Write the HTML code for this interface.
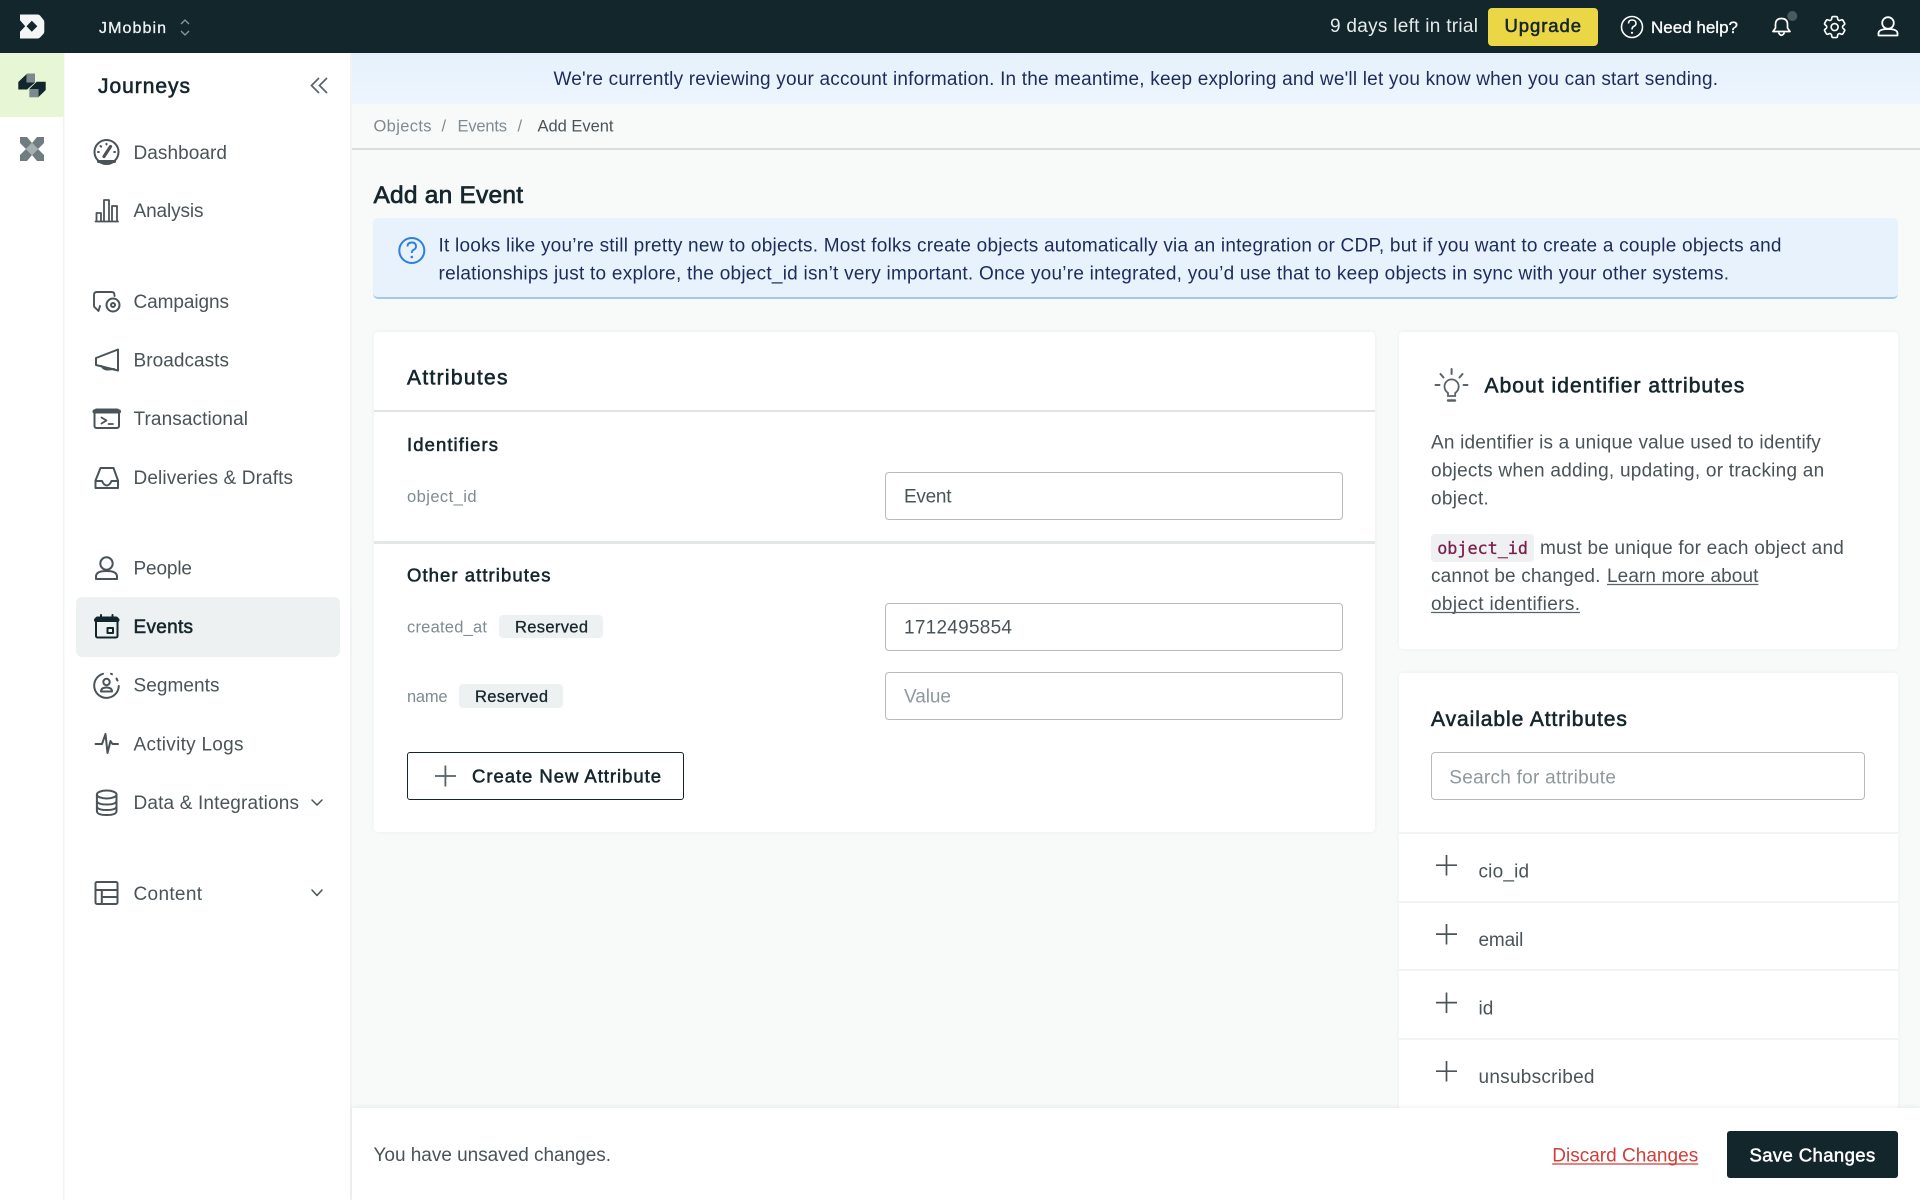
<!DOCTYPE html>
<html lang="en"><head><meta charset="utf-8"><title>Add an Event</title>
<style>
html,body{margin:0;padding:0;width:1920px;height:1200px;overflow:hidden;background:#f8fafa;font-family:"Liberation Sans",sans-serif}
.b{position:absolute;box-sizing:border-box}
.inp{background:#fff;border:1.5px solid #b5bbbe;border-radius:4px}
.card{background:#fff;border-radius:4px;box-shadow:0 0 4px rgba(20,40,50,.06)}
svg{position:absolute;left:0;top:0}
text{font-family:"Liberation Sans",sans-serif;font-size:19px;fill:currentColor;color:#4a5458}
.m{stroke:currentColor;stroke-width:.3}
.sb{stroke:currentColor;stroke-width:.55;color:#15262c}
.d{color:#15262c}
.s{font-size:16.5px}
.g{color:#7f8b90}
.ph{color:#8f989c}
.h{font-size:21px;stroke:currentColor;stroke-width:.6;color:#15262c}
.bl{color:#1d2c5a}
.ic{fill:none;stroke:#4a5458;stroke-width:2;stroke-linejoin:round;stroke-linecap:round}
</style></head><body>
<div class="b" style="left:0;top:0;width:1920px;height:53px;background:#13262c"></div>
<div class="b" style="left:0;top:53px;width:64px;height:1147px;background:#fff;border-right:1px solid #f0f2f3"></div>
<div class="b" style="left:0;top:53px;width:64px;height:64px;background:#e7f7d6"></div>
<div class="b" style="left:65px;top:53px;width:287px;height:1147px;background:#fff;border-right:2px solid #f0f2f3"></div>
<div class="b" style="left:76px;top:597px;width:264px;height:60px;background:#edf1f2;border-radius:6px"></div>
<div class="b" style="left:352px;top:53px;width:1568px;height:51px;background:linear-gradient(#e6f1fd,#edf5fd)"></div>
<div class="b" style="left:352px;top:148px;width:1568px;height:1.5px;background:#d9dddf"></div>
<div class="b" style="left:373px;top:218px;width:1525px;height:81px;background:#e8f2fc;border-bottom:2px solid #9ccbeb;border-radius:5px"></div>

<div class="b card" style="left:374px;top:332px;width:1001px;height:500px"></div>
<div class="b" style="left:374px;top:410px;width:1001px;height:2px;background:#e0e3e5"></div>
<div class="b" style="left:374px;top:541px;width:1001px;height:2.5px;background:#e4e7e8"></div>
<div class="b inp" style="left:885px;top:472px;width:458px;height:48px"></div>
<div class="b inp" style="left:885px;top:603px;width:458px;height:48px"></div>
<div class="b inp" style="left:885px;top:672px;width:458px;height:48px"></div>
<div class="b" style="left:499px;top:615px;width:104px;height:23px;background:#eef1f2;border-radius:4px"></div>
<div class="b" style="left:459px;top:684px;width:104px;height:24px;background:#eef1f2;border-radius:4px"></div>
<div class="b" style="left:407px;top:752px;width:277px;height:48px;border:1.5px solid #13262c;border-radius:3px;background:#fff"></div>

<div class="b card" style="left:1399px;top:332px;width:499px;height:317px"></div>
<div class="b" style="left:1431px;top:534px;width:103px;height:28px;background:#eef0f1;border-radius:4px"></div>

<div class="b card" style="left:1399px;top:673px;width:499px;height:527px"></div>
<div class="b inp" style="left:1431px;top:752px;width:434px;height:48px"></div>
<div class="b" style="left:1399px;top:832px;width:499px;height:1.5px;background:#f1f3f4"></div>
<div class="b" style="left:1399px;top:901px;width:499px;height:1.5px;background:#f1f3f4"></div>
<div class="b" style="left:1399px;top:969px;width:499px;height:1.5px;background:#f1f3f4"></div>
<div class="b" style="left:1399px;top:1038px;width:499px;height:1.5px;background:#f1f3f4"></div>

<div class="b" style="left:352px;top:1108px;width:1568px;height:92px;background:#fff;box-shadow:0 -1px 4px rgba(20,40,50,.07)"></div>
<div class="b" style="left:1488px;top:8px;width:110px;height:38px;background:#ebd646;border-radius:4px"></div>
<div class="b" style="left:1727px;top:1131px;width:171px;height:47px;background:#13262c;border-radius:3px"></div>

<svg width="1920" height="1200" viewBox="0 0 1920 1200" xmlns="http://www.w3.org/2000/svg">
<!-- logo -->
<path d="M20 14.500H37.500Q39 14.500 40 15.500L43.300 19.500Q44.300 20.700 44.300 22V31.500Q44.300 33 43.300 34L40 37.500Q39 38.500 37.500 38.500H20V31.800L25.200 26.300L20 20.300Z" fill="#f3f5f6"/>
<path d="M31.800 20.700L37.300 26.300L31.800 31.800L26.500 26.300Z" fill="#13262c"/>
<text x="99" y="33" textLength="67" class="m" style="font-size:16px;color:#eef1f2">JMobbin</text>
<path d="M181 24L185 20L189 24M181 31L185 35L189 31" fill="none" stroke="#8d999d" stroke-width="1.300"/>

<text x="1330" y="32" textLength="148" style="color:#e6eaeb">9 days left in trial</text>
<text x="1504.500" y="32" textLength="76.500" class="sb" style="font-size:18.500px;color:#13262c">Upgrade</text>
<circle cx="1632" cy="27" r="10.500" fill="none" stroke="#fff" stroke-width="1.600"/>
<path d="M1628.500 23.500Q1628.500 20 1632 20Q1636 20 1636 23.500Q1636 25.500 1633.500 26.500Q1632 27.300 1632 29.500" fill="none" stroke="#fff" stroke-width="1.600"/><circle cx="1632" cy="32.800" r="1.100" fill="#fff"/>
<text x="1651" y="33" textLength="87" class="m" style="font-size:17px;color:#fff">Need help?</text>
<path d="M1773 31.500H1790L1787.500 28V24.500Q1787.500 18.500 1781.500 18.500Q1775.500 18.500 1775.500 24.500V28ZM1778.500 32.500Q1781.500 38 1784.500 32.500" fill="none" stroke="#fff" stroke-width="1.700" stroke-linejoin="round"/>
<circle cx="1792.300" cy="16" r="5" fill="#4b5a60"/>
<g transform="translate(1820.600 13) scale(1.170)" fill="none" stroke="#fff" stroke-width="1.400" stroke-linejoin="round"><path d="M9.594 3.94c.09-.542.56-.94 1.11-.94h2.593c.55 0 1.02.398 1.11.94l.213 1.281c.063.374.313.686.645.87.074.04.147.083.22.127.325.196.72.257 1.075.124l1.217-.456a1.125 1.125 0 0 1 1.37.49l1.296 2.247a1.125 1.125 0 0 1-.26 1.431l-1.003.827c-.293.241-.438.613-.43.992a7.723 7.723 0 0 1 0 .255c-.008.378.137.75.43.991l1.004.827c.424.35.534.955.26 1.43l-1.298 2.247a1.125 1.125 0 0 1-1.369.491l-1.217-.456c-.355-.133-.75-.072-1.076.124a6.47 6.47 0 0 1-.22.128c-.331.183-.581.495-.644.869l-.213 1.281c-.09.543-.56.94-1.11.94h-2.594c-.55 0-1.019-.398-1.11-.94l-.213-1.281c-.062-.374-.312-.686-.644-.87a6.52 6.52 0 0 1-.22-.127c-.325-.196-.72-.257-1.076-.124l-1.217.456a1.125 1.125 0 0 1-1.369-.49l-1.297-2.247a1.125 1.125 0 0 1 .26-1.431l1.004-.827c.292-.24.437-.613.43-.991a6.932 6.932 0 0 1 0-.255c.007-.38-.138-.751-.43-.992l-1.004-.827a1.125 1.125 0 0 1-.26-1.43l1.297-2.247a1.125 1.125 0 0 1 1.37-.491l1.216.456c.356.133.751.072 1.076-.124.072-.044.146-.086.22-.128.332-.183.582-.495.644-.869l.214-1.28Z"/><circle cx="12" cy="12" r="3"/></g>
<circle cx="1888" cy="23" r="5.800" fill="none" stroke="#fff" stroke-width="1.800"/>
<path d="M1878.500 35.500V33.500Q1878.500 29 1888 29Q1897.500 29 1897.500 33.500V35.500Z" fill="none" stroke="#fff" stroke-width="1.800" stroke-linejoin="round"/>

<!-- rail icons -->
<path d="M18.300 82L26.700 74V82.500H35L27 89.500H18.300Z" fill="#13262c"/>
<rect x="26.700" y="73.500" width="8.300" height="9" fill="#7c8a8f"/>
<path d="M36.700 81.700H45.700V90L38.300 97.300V89H29.300Z" fill="#13262c"/>
<rect x="29.300" y="89" width="9" height="8.300" fill="#7c8a8f"/>
<path d="M20 137H27L32 143L26 149L20 143ZM44 137H37L32 143L38 149L44 143ZM20 161H27L32 155L26 149L20 155ZM44 161H37L32 155L38 149L44 155Z" fill="#6f7c80"/>
<path d="M32 143L38 149L32 155L26 149Z" fill="#a6aeb1"/>

<text x="98" y="93" textLength="92" style="font-size:21px;stroke:currentColor;stroke-width:.6;color:#15262c">Journeys</text>
<path d="M319 78L311.500 85.500L319 93M327 78L319.500 85.500L327 93" fill="none" stroke="#5a6468" stroke-width="1.700"/>

<!-- nav icons -->
<g class="ic">
<circle cx="106.500" cy="152" r="12"/>
<path d="M104 156.500L110.500 146.500" stroke-width="3.200"/>
<path d="M106.500 143.800V144.500M100.500 146L101.200 146.700M98 152H98.800M114.200 152H115"/>
<path d="M98.500 161.500H114.500" stroke-width="3"/>
<path d="M95.500 221.500H118M96.500 221V213H101V221M104 221V200H109V221M112 221V206H117V221" stroke-width="1.800"/>
<path d="M114.500 296V295Q114.500 292 111.500 292H97Q94 292 94 295V306Q94 307 95 307.500L98.500 311L100 306" stroke-width="1.900"/>
<circle cx="113" cy="305" r="6.500"/><circle cx="113" cy="305" r="2"/>
<path d="M118 349.500L96 358V365L118 370.500ZM101.500 366Q104 370 108 369.500L114 369"/>
<rect x="94.500" y="409.500" width="24.500" height="18.500" rx="2"/>
<path d="M94.500 411.500H119" stroke-width="4"/>
<path d="M101.500 417.500L106.500 420.500L101.500 423.500M108.500 424H113" stroke-width="1.800"/>
<path d="M100.500 468H113.500L118 480.500V488H95.500V480.500ZM95.500 481H102Q104 485.500 106.800 485.500Q109.500 485.500 111.500 481H118"/>
<circle cx="106.500" cy="563.500" r="6.200"/>
<path d="M96 579V576.500Q96 571 106.500 571Q117 571 117 576.500V579Z"/>
</g>
<g class="ic" style="stroke:#13262c">
<rect x="96" y="617.500" width="21.500" height="20" rx="1.500"/>
<path d="M96 620H117.500" stroke-width="4"/>
<path d="M101 615V618M112.500 615V618"/>
<rect x="107.500" y="628" width="5.500" height="5"/>
</g>
<g class="ic">
<path d="M103 673.800A12.300 12.300 0 1 0 118.800 686M111 673.800L112 674.200M116.500 678.500L117.500 680.500"/>
<circle cx="106.500" cy="682" r="3.200"/>
<path d="M101 691.500Q101 687.500 106.500 687.500Q112 687.500 112 691.500Z"/>
<path d="M95.500 744H102L105.500 734L107.500 753L110.500 741L112.500 744H118"/>
<ellipse cx="106.700" cy="794.500" rx="9.800" ry="4"/>
<path d="M96.900 794.500V811Q96.900 815 106.700 815Q116.500 815 116.500 811V794.500M96.900 800.500Q96.900 804.500 106.700 804.500Q116.500 804.500 116.500 800.500M96.900 806Q96.900 810 106.700 810Q116.500 810 116.500 806"/>
<rect x="95.500" y="882" width="22" height="22" rx="1.500"/>
<path d="M95.500 890H117.500M101.800 890V904M101.800 897H117.500"/>
<path d="M312 800L317 805L322 800M312 890L317 895.500L322 890" stroke-width="1.500" fill="none"/>
</g>

<!-- nav text -->
<text x="133.500" y="159" textLength="93.500">Dashboard</text>
<text x="133.500" y="217" textLength="70">Analysis</text>
<text x="133.500" y="308" textLength="95.500">Campaigns</text>
<text x="133.500" y="366.500" textLength="95.500">Broadcasts</text>
<text x="133.500" y="425" textLength="114.500">Transactional</text>
<text x="133.500" y="484" textLength="159.500">Deliveries &amp; Drafts</text>
<text x="133.500" y="574.500" textLength="58.500">People</text>
<text x="133.500" y="633" textLength="59.500" class="sb">Events</text>
<text x="133.500" y="691.500" textLength="86">Segments</text>
<text x="133.500" y="750.500" textLength="110">Activity Logs</text>
<text x="133.500" y="809" textLength="165.500">Data &amp; Integrations</text>
<text x="133.500" y="900" textLength="68.500">Content</text>

<!-- banner / breadcrumb / title -->
<text x="553.500" y="85" textLength="1164.500" class="bl">We're currently reviewing your account information. In the meantime, keep exploring and we'll let you know when you can start sending.</text>
<text x="373.500" y="131.500" textLength="58" class="s g">Objects</text>
<text x="441.500" y="131.500" class="s g">/</text>
<text x="457.500" y="131.500" textLength="49.500" class="s g">Events</text>
<text x="517.500" y="131.500" class="s g">/</text>
<text x="537.500" y="131.500" textLength="76" class="s">Add Event</text>
<text x="373.500" y="203" textLength="149.500" style="font-size:24.500px;stroke:currentColor;stroke-width:.7;color:#15262c">Add an Event</text>

<!-- info -->
<circle cx="411.800" cy="250.500" r="12.500" fill="none" stroke="#2f7fdd" stroke-width="2"/>
<path d="M407.500 246.500Q407.500 242.500 411.800 242.500Q416 242.500 416 246.500Q416 248.800 413.300 250Q411.800 250.800 411.800 253" fill="none" stroke="#2f7fdd" stroke-width="1.900"/><circle cx="411.800" cy="257" r="1.300" fill="#2f7fdd"/>
<text x="438.500" y="251.500" textLength="1343" class="bl">It looks like you’re still pretty new to objects. Most folks create objects automatically via an integration or CDP, but if you want to create a couple objects and</text>
<text x="438.500" y="279.500" textLength="1290.500" class="bl">relationships just to explore, the object_id isn’t very important. Once you’re integrated, you’d use that to keep objects in sync with your other systems.</text>

<!-- attributes -->
<text x="407" y="384.500" textLength="100.500" class="h">Attributes</text>
<text x="407" y="451" textLength="91" class="sb" style="font-size:18.500px">Identifiers</text>
<text x="407" y="502" textLength="69.500" class="s g">object_id</text>
<text x="904" y="502.500" textLength="47.500">Event</text>
<text x="407" y="581.500" textLength="143.500" class="sb" style="font-size:18.500px">Other attributes</text>
<text x="407" y="632.700" textLength="80" class="s g">created_at</text>
<text x="515" y="632.700" textLength="73" class="s d m">Reserved</text>
<text x="904" y="633.300" textLength="108">1712495854</text>
<text x="407" y="702" textLength="40.500" class="s g">name</text>
<text x="475" y="702" textLength="73" class="s d m">Reserved</text>
<text x="904" y="702.700" textLength="47" class="ph">Value</text>
<path d="M445.400 765.500V786.500M435 776H456" stroke="#55606a" stroke-width="1.800" fill="none"/>
<text x="472" y="782.700" textLength="189" class="sb" style="font-size:18.500px">Create New Attribute</text>

<!-- about -->
<g fill="none" stroke="#5a6468" stroke-width="2" stroke-linecap="round">
<path d="M1451.600 369V374M1440.500 374L1443.500 377.500M1462.500 374L1459.500 377.500M1435.500 385H1439.500M1463.500 385H1467.500" />
<path d="M1448 396V393Q1444.500 390.500 1444.500 386.500A7 7 0 0 1 1458.700 386.500Q1458.700 390.500 1455.200 393V396Z" stroke-width="1.800"/>
<path d="M1448 400.500H1455" stroke-width="2.400"/>
</g>
<text x="1484.500" y="392.700" textLength="259.800" class="h">About identifier attributes</text>
<text x="1431" y="448.700" textLength="389.800">An identifier is a unique value used to identify</text>
<text x="1431" y="476.700" textLength="393.200">objects when adding, updating, or tracking an</text>
<text x="1431" y="504.700" textLength="57.800">object.</text>
<text x="1437.200" y="553.800" textLength="90.800" class="m" style="font-family:'DejaVu Sans Mono','Liberation Mono',monospace;font-size:16.800px;color:#7a1f4d">object_id</text>
<text x="1540" y="553.800" textLength="303.800">must be unique for each object and</text>
<text x="1431" y="582" textLength="169.400">cannot be changed.</text>
<text x="1607" y="582" textLength="151.400">Learn more about</text>
<text x="1431" y="610" textLength="149">object identifiers.</text>
<path d="M1607 584.500H1758.400M1431 612.500H1580" stroke="#5a6468" stroke-width="1.300"/>

<!-- available -->
<text x="1431" y="726" textLength="195.900" class="h">Available Attributes</text>
<text x="1449.300" y="783.300" textLength="166.600" class="ph">Search for attribute</text>
<path d="M1446.500 855V875.500M1436 865.200H1457M1446.500 924V944.500M1436 934.100H1457M1446.500 992.500V1013M1436 1002.600H1457M1446.500 1061V1081.500M1436 1071.200H1457" stroke="#4a5458" stroke-width="1.700" fill="none"/>
<text x="1478.500" y="877.300" textLength="50.600">cio_id</text>
<text x="1478.500" y="945.800" textLength="44.800">email</text>
<text x="1478.500" y="1014.700" textLength="14.800">id</text>
<text x="1478.500" y="1082.900" textLength="116">unsubscribed</text>

<!-- footer -->
<text x="373.500" y="1161" textLength="237.500">You have unsaved changes.</text>
<text x="1552.200" y="1161.400" textLength="146" style="color:#cf3f38">Discard Changes</text>
<path d="M1552.200 1164H1698.200" stroke="#cf3f38" stroke-width="1.300"/>
<text x="1749.500" y="1161.400" textLength="125.700" class="m" style="font-size:18.500px;stroke-width:.5;color:#fff">Save Changes</text>
</svg>
</body></html>
